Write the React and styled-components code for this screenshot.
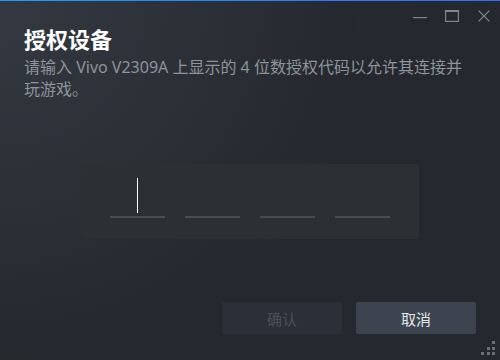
import React from "react";
import styled, { createGlobalStyle } from "styled-components";

const Global = createGlobalStyle`
  html, body { margin: 0; padding: 0; background: #25282e; }
  * { box-sizing: border-box; }
  body { font-family: "Noto Sans", "Noto Sans CJK SC", sans-serif; }
`;

const Frame = styled.div`
  position: relative;
  width: 500px;
  height: 360px;
  display: flex;
  flex-direction: column;
  border-top: 1px solid transparent;
  border-image: linear-gradient(90deg, #1a9fff, #2f6cff) 1;
  background: radial-gradient(circle at top left, rgba(74, 81, 92, 0.4) 0%, rgba(75, 81, 92, 0) 60%), #25282e;
  overflow: hidden;
`;

const TitleBar = styled.div`
  height: 23px;
  display: flex;
  justify-content: flex-end;
`;

const ControlButton = styled.div`
  width: 32px;
  height: 23px;
  display: flex;
  justify-content: center;
  padding-top: 9px;
  color: #7f868e;
`;

const Content = styled.div`
  flex: 1;
  display: flex;
  flex-direction: column;
  padding: 0 24px;
`;

const Title = styled.div`
  font-family: "Noto Sans CJK SC", sans-serif;
  font-size: 22px;
  line-height: 28px;
  font-weight: 700;
  color: #ffffff;
`;

const Subtitle = styled.div`
  margin-top: 4px;
  font-family: "Noto Sans", "Noto Sans CJK SC", sans-serif;
  font-size: 16px;
  line-height: 22px;
  color: #8d949c;
`;

const Middle = styled.div`
  flex: 1;
  display: flex;
  align-items: center;
  justify-content: center;
`;

const CodePanel = styled.div`
  width: 338px;
  display: flex;
  gap: 20px;
  padding: 14px 29px 21px;
  background: #2c2f34;
  border-radius: 2px;
`;

const Slot = styled.div`
  width: 55px;
  height: 40px;
  display: flex;
  flex-direction: column;
  align-items: center;
  border-bottom: 2px solid #4a4c51;
`;

const Caret = styled.div`
  width: 1px;
  height: 35px;
  background: #ffffff;
  margin-right: 0px;
`;

const Footer = styled.div`
  display: flex;
  justify-content: flex-end;
  gap: 14px;
  padding: 0 24px 26px;
`;

const Button = styled.div`
  width: 120px;
  height: 32px;
  display: flex;
  align-items: center;
  justify-content: center;
  border-radius: 2px;
  font-family: "Noto Sans CJK SC", sans-serif;
  font-size: 15px;
  background: ${(p) => (p.$disabled ? "#2b2f37" : "#3d4450")};
  color: ${(p) => (p.$disabled ? "#4b5058" : "#e4e7ea")};
`;

const Grip = styled.div`
  position: absolute;
  right: 5px;
  bottom: 5px;
  width: 14px;
  height: 14px;
  display: grid;
  grid-template-columns: repeat(3, 3px);
  grid-template-rows: repeat(3, 3px);
  gap: 2.5px;
`;

const Dot = styled.span`
  width: 3px;
  height: 3px;
  background: ${(p) => (p.$on ? "#6b6f75" : "transparent")};
`;

const gripPattern = [0, 0, 1, 0, 1, 1, 1, 1, 1];

export default function App() {
  return (
    <>
      <Global />
      <Frame>
        <TitleBar>
          <ControlButton>
            <svg width="14" height="12" viewBox="0 0 14 12">
              <rect x="0" y="7" width="14" height="1.2" fill="currentColor" />
            </svg>
          </ControlButton>
          <ControlButton>
            <svg width="14" height="12" viewBox="0 0 14 12">
              <rect x="0.6" y="0.6" width="12.8" height="10.8" fill="none" stroke="currentColor" strokeWidth="1.2" />
              <rect x="0" y="0" width="14" height="2" fill="currentColor" />
            </svg>
          </ControlButton>
          <ControlButton>
            <svg width="12" height="12" viewBox="0 0 12 12">
              <path d="M0.6 0.6 L11.4 11.4 M11.4 0.6 L0.6 11.4" stroke="currentColor" strokeWidth="1.3" fill="none" />
            </svg>
          </ControlButton>
        </TitleBar>
        <Content>
          <Title>授权设备</Title>
          <Subtitle>请输入 Vivo V2309A 上显示的 4 位数授权代码以允许其连接并玩游戏。</Subtitle>
          <Middle>
            <CodePanel>
              <Slot>
                <Caret />
              </Slot>
              <Slot />
              <Slot />
              <Slot />
            </CodePanel>
          </Middle>
        </Content>
        <Footer>
          <Button $disabled>确认</Button>
          <Button>取消</Button>
        </Footer>
        <Grip>
          {gripPattern.map((on, i) => (
            <Dot key={i} $on={!!on} />
          ))}
        </Grip>
      </Frame>
    </>
  );
}
